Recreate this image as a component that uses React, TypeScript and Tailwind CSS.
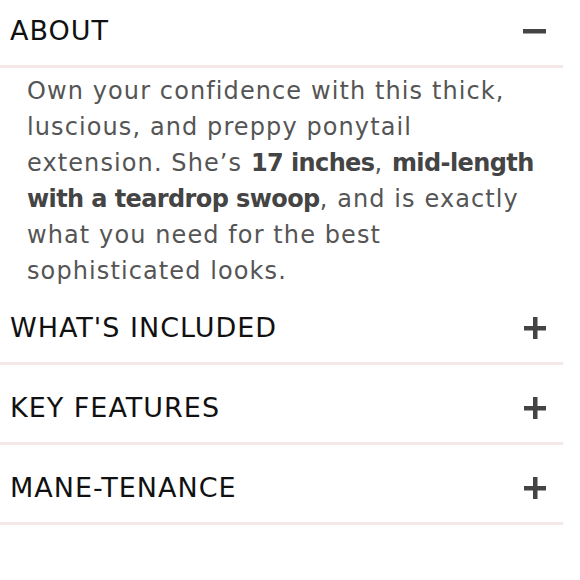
import React from "react";

const Plus = () => (
  <svg width="22" height="22" viewBox="0 0 22 22" className="shrink-0">
    <rect x="9" y="0" width="4.5" height="22" fill="#444" />
    <rect x="0" y="9" width="22" height="4.5" fill="#444" />
  </svg>
);

const Minus = () => (
  <svg width="23" height="22" viewBox="0 0 23 22" className="shrink-0">
    <rect x="0" y="9" width="23" height="4.5" fill="#444" />
  </svg>
);

function Header({ title, open, first }: { title: string; open?: boolean; first?: boolean }) {
  return (
    <div
      className={`flex items-end justify-between pl-[10px] pr-[17px] pb-[21px] border-b-[3px] border-[#f4e8e8] ${
        first ? "h-[68px]" : "h-[80px]"
      }`}
    >
      <span className="text-[27px] leading-[27px] text-[#111] tracking-[1px]">{title}</span>
      <span className="mb-[2px]">{open ? <Minus /> : <Plus />}</span>
    </div>
  );
}

const B = ({ children }: { children: React.ReactNode }) => (
  <b className="text-[#444] tracking-[-0.6px]">{children}</b>
);

export default function App() {
  return (
    <div className="w-[580px] h-[580px] bg-white overflow-hidden" style={{ fontFamily: '"DejaVu Sans", sans-serif' }}>
      <div className="w-[563px]">
        <Header title="ABOUT" open first />
        <div className="pl-[27px] pt-[5px] text-[24px] leading-[36px] text-[#555] tracking-[1.1px] whitespace-nowrap h-[217px]">
          Own your confidence with this thick,
          <br />
          luscious, and preppy ponytail
          <br />
          extension. She’s <B>17 inches</B>, <B>mid-length</B>
          <br />
          <B>with a teardrop swoop</B>, and is exactly
          <br />
          what you need for the best
          <br />
          sophisticated looks.
        </div>
        <Header title="WHAT'S INCLUDED" />
        <Header title="KEY FEATURES" />
        <Header title="MANE-TENANCE" />
      </div>
    </div>
  );
}
